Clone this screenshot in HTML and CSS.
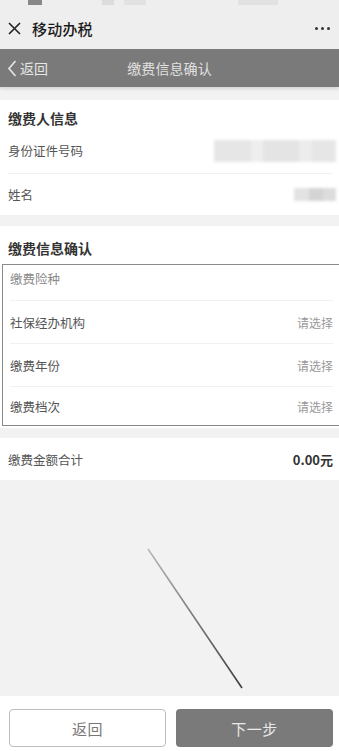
FILE: index.html
```html
<!DOCTYPE html>
<html lang="zh-CN">
<head>
<meta charset="utf-8">
<title>缴费信息确认</title>
<link rel="stylesheet" href="styles.css">
</head>
<body>
<div class="page">
  <div class="status">
    <span class="st st-a"></span>
    <span class="st st-b"></span>
    <span class="st st-c"></span>
    <span class="st st-d"></span>
  </div>
  <div class="titlebar">
    <svg class="close" width="13" height="13" viewBox="0 0 13 13"><path d="M1 1L12 12M12 1L1 12" stroke="#222" stroke-width="1.6" fill="none"/></svg>
    <span class="app-name">移动办税</span>
    <span class="more"><i></i><i></i><i></i></span>
  </div>
  <div class="navbar">
    <div class="back">
      <svg width="10" height="17" viewBox="0 0 10 17"><path d="M8.5 1L2 8.5L8.5 16" stroke="#e8e8e8" stroke-width="1.6" fill="none"/></svg>
      <span>返回</span>
    </div>
    <div class="nav-title">缴费信息确认</div>
  </div>

  <section class="card card-payer">
    <div class="card-head">缴费人信息</div>
    <div class="row row-id">
      <span class="label">身份证件号码</span>
      <span class="blur blur-id"></span>
    </div>
    <div class="row row-name">
      <span class="label">姓名</span>
      <span class="blur blur-name"></span>
    </div>
  </section>

  <section class="card card-confirm">
    <div class="card-head head-confirm">缴费信息确认</div>
    <div class="box">
      <div class="brow brow-first"><span class="label light">缴费险种</span></div>
      <div class="brow"><span class="label">社保经办机构</span><span class="pick">请选择</span></div>
      <div class="brow"><span class="label">缴费年份</span><span class="pick">请选择</span></div>
      <div class="brow brow-last"><span class="label">缴费档次</span><span class="pick">请选择</span></div>
    </div>
  </section>

  <section class="card total">
    <span class="label">缴费金额合计</span>
    <span class="amount">0.00元</span>
  </section>

  <div class="filler">
    <svg width="339" height="216" viewBox="0 0 339 216">
      <defs>
        <linearGradient id="lg" x1="148" y1="69" x2="242" y2="208" gradientUnits="userSpaceOnUse">
          <stop offset="0" stop-color="#b8b8b8"/>
          <stop offset="1" stop-color="#3c3c3c"/>
        </linearGradient>
      </defs>
      <path d="M148 69L242 208" stroke="url(#lg)" stroke-width="1.6" fill="none"/>
    </svg>
  </div>

  <div class="footer">
    <button class="btn btn-back">返回</button>
    <button class="btn btn-next">下一步</button>
  </div>
</div>
</body>
</html>
```

FILE: styles.css
```css
* { box-sizing: border-box; margin: 0; padding: 0; }
html, body { width: 339px; height: 751px; overflow: hidden; }
body {
  background: #f2f2f2;
  font-family: "Noto Sans CJK SC", "Noto Sans", sans-serif;
  color: #555;
}
.page { display: flex; flex-direction: column; height: 751px; overflow: hidden; }

.status { height: 8px; background: #eeeeee; display: flex; align-items: flex-start; }
.st { display: block; height: 5px; }
.st-a { width: 14px; margin-left: 28px; background: #888; }
.st-b { width: 12px; margin-left: 60px; background: #dcdcdc; }
.st-c { width: 22px; margin-left: 10px; background: #e2e2e2; }
.st-d { width: 40px; margin-left: 92px; background: #e2e2e2; }

.titlebar {
  height: 41px;
  background: #eeeeee;
  display: flex;
  align-items: center;
  padding: 0 9px 0 8px;
}
.close { margin-right: 11px; }
.app-name { font-size: 15px; color: #1a1a1a; font-weight: 500; letter-spacing: 0.2px; }
.more { margin-left: auto; display: flex; gap: 3px; }
.more i { display: block; width: 3px; height: 3px; border-radius: 50%; background: #333; }

.navbar {
  height: 38px;
  background: #7a7a7a;
  display: flex;
  align-items: center;
  position: relative;
  box-shadow: 0 2px 3px rgba(0,0,0,0.12);
  z-index: 1;
}
.back { display: flex; align-items: center; padding-left: 7px; color: #e6e6e6; font-size: 14px; gap: 3px; }
.nav-title {
  position: absolute;
  left: 0; right: 0;
  text-align: center;
  font-size: 14px;
  color: #e0e0e0;
  letter-spacing: 0.1px;
  pointer-events: none;
}

.card { background: #fff; }
.card-payer { margin-top: 13px; height: 115px; }
.card-head {
  font-size: 14px;
  font-weight: 700;
  color: #333;
  line-height: 16px;
  padding: 10px 8px 0;
  height: 28px;
}
.row {
  display: flex;
  align-items: center;
  justify-content: space-between;
  margin: 0 7px 0 8px;
}
.row-id { height: 46px; border-bottom: 1px solid #f0f0f0; }
.row-name { height: 41px; }
.label { font-size: 12.5px; color: #555; }
.label.light { color: #8a8a8a; }
.blur { display: block; filter: blur(1.5px); }
.blur-id {
  width: 122px; height: 22px;
  margin-right: -4px;
  background: linear-gradient(90deg, #e6e6e6 0 30%, #eeeeee 30% 40%, #e4e4e4 40% 70%, #ececec 70% 80%, #e6e6e6 80%);
}
.blur-name {
  width: 42px; height: 13px;
  margin-right: -4px;
  background: linear-gradient(90deg, #e2e2e2 0 35%, #d4d4d4 35% 70%, #dcdcdc 70%);
}

.card-confirm { margin-top: 11px; padding-bottom: 2px; }
.head-confirm { padding-top: 14px; height: 38px; }
.box {
  margin-left: 2px;
  margin-right: -6px;
  border: 1px solid #8a8a8a;
}
.brow {
  display: flex;
  align-items: center;
  justify-content: space-between;
  margin: 0 11px 0 7px;
  height: 43px;
  border-bottom: 1px solid #f0f0f0;
}
.brow-first { height: 36px; align-items: flex-start; padding-top: 6px; line-height: 15px; }
.brow-last { height: 38px; border-bottom: none; }
.pick { font-size: 12px; color: #999; }

.total {
  margin-top: 10px;
  height: 42px;
  display: flex;
  align-items: center;
  justify-content: space-between;
  padding: 0 6px 0 8px;
}
.amount { font-size: 13px; font-weight: 700; color: #333; }

.filler { flex: 1; display: block; }
.filler svg { display: block; }

.footer {
  height: 55px;
  background: #fff;
  display: flex;
  gap: 10px;
  padding: 13px 6px 0 9px;
}
.btn {
  width: 157px;
  height: 38px;
  border-radius: 4px;
  font-family: "Noto Sans CJK SC", sans-serif;
  font-size: 15px;
  letter-spacing: 0.5px;
}
.btn-back { background: #fff; border: 1px solid #bdbdbd; color: #777; }
.btn-next { background: #7a7a7a; border: none; color: #eaeaea; }
```
